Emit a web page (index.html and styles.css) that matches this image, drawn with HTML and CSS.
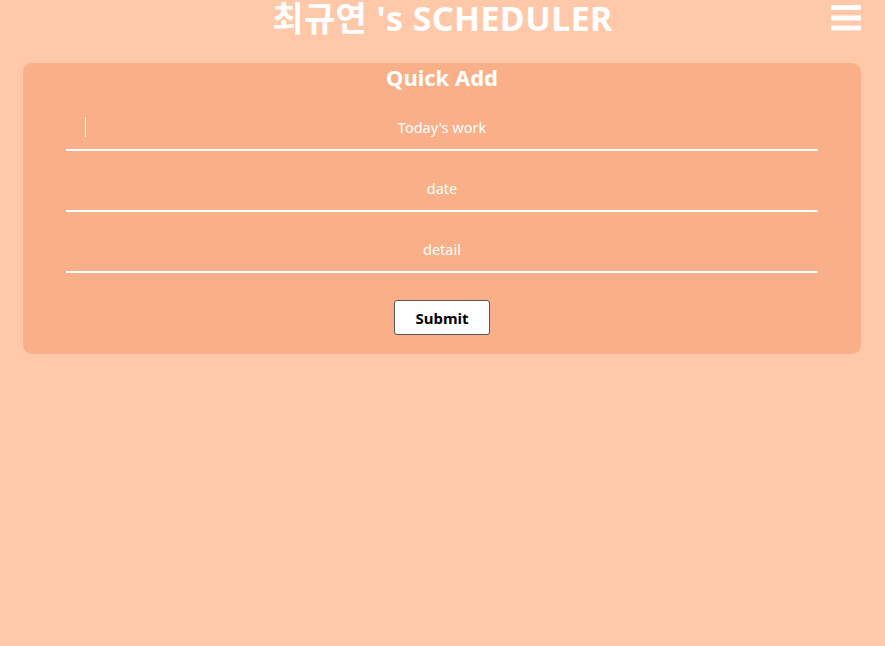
FILE: index.html
```
<!DOCTYPE html>
<html lang="ko">
<head>
<meta charset="utf-8">
<title>Scheduler</title>
<link rel="stylesheet" href="styles.css">
</head>
<body>
<header class="top">
  <h1 class="title">최규연 's SCHEDULER</h1>
  <button class="menu" aria-label="menu">
    <svg width="30" height="26" viewBox="0 0 30 26"><rect x="0" y="0" width="30" height="5" rx="1" fill="#fff"/><rect x="0" y="10.5" width="30" height="5" rx="1" fill="#fff"/><rect x="0" y="20.5" width="30" height="5" rx="1" fill="#fff"/></svg>
  </button>
</header>
<main class="card">
  <h2 class="card-title">Quick Add</h2>
  <form class="form">
    <div class="field">
      <span class="caret"></span>
      <input class="input" type="text" placeholder="Today's work">
    </div>
    <div class="field"><input class="input" type="text" placeholder="date"></div>
    <div class="field"><input class="input" type="text" placeholder="detail"></div>
    <button class="submit" type="button">Submit</button>
  </form>
</main>
</body>
</html>
```
FILE: styles.css
```
html, body {
  margin: 0;
  padding: 0;
}
body {
  background: #ffc8a8;
  font-family: "Open Sans", "Noto Sans", "Noto Sans CJK KR", sans-serif;
  color: #fff;
  height: 646px;
}
.top {
  position: relative;
  height: 63px;
  display: flex;
  justify-content: center;
}
.title {
  margin: 0;
  font-family: "Noto Sans", "Noto Sans CJK KR", sans-serif;
  font-size: 34px;
  font-weight: 700;
  line-height: 36px;
  color: #fff;
  letter-spacing: 0.4px;
}
.menu {
  position: absolute;
  right: 24px;
  top: 5px;
  background: none;
  border: 0;
  padding: 0;
  line-height: 0;
}
.card {
  margin: 0 24px 0 23px;
  background: #f9b088;
  border-radius: 9px;
  padding: 0 43px 19px;
  height: 272px;
}
.card-title {
  margin: 0;
  text-align: center;
  font-family: "Noto Sans", sans-serif;
  font-size: 22px;
  font-weight: 700;
  line-height: 28px;
  color: #fff;
}
.form {
  display: flex;
  flex-direction: column;
  align-items: center;
}
.field {
  position: relative;
  width: 100%;
  height: 61px;
  display: flex;
  align-items: flex-end;
}
.field:first-child {
  height: 60px;
}
.input {
  width: 100%;
  box-sizing: border-box;
  height: 40px;
  background: transparent;
  border: 0;
  border-bottom: 2px solid #fff;
  text-align: center;
  font-family: "Noto Sans", sans-serif;
  font-size: 14.5px;
  color: #fff;
  outline: none;
  padding: 0 0 6px;
}
.input::placeholder {
  color: #fff;
  opacity: 1;
}
.caret {
  position: absolute;
  left: 19px;
  top: 26px;
  width: 1px;
  height: 20px;
  background: #fff;
}
.submit {
  margin-top: 27px;
  width: 96px;
  height: 35px;
  background: #fff;
  border: 1px solid #555;
  border-radius: 3px;
  font-family: "Noto Sans", sans-serif;
  font-size: 15px;
  font-weight: 700;
  color: #000;
  padding: 0;
}
```
